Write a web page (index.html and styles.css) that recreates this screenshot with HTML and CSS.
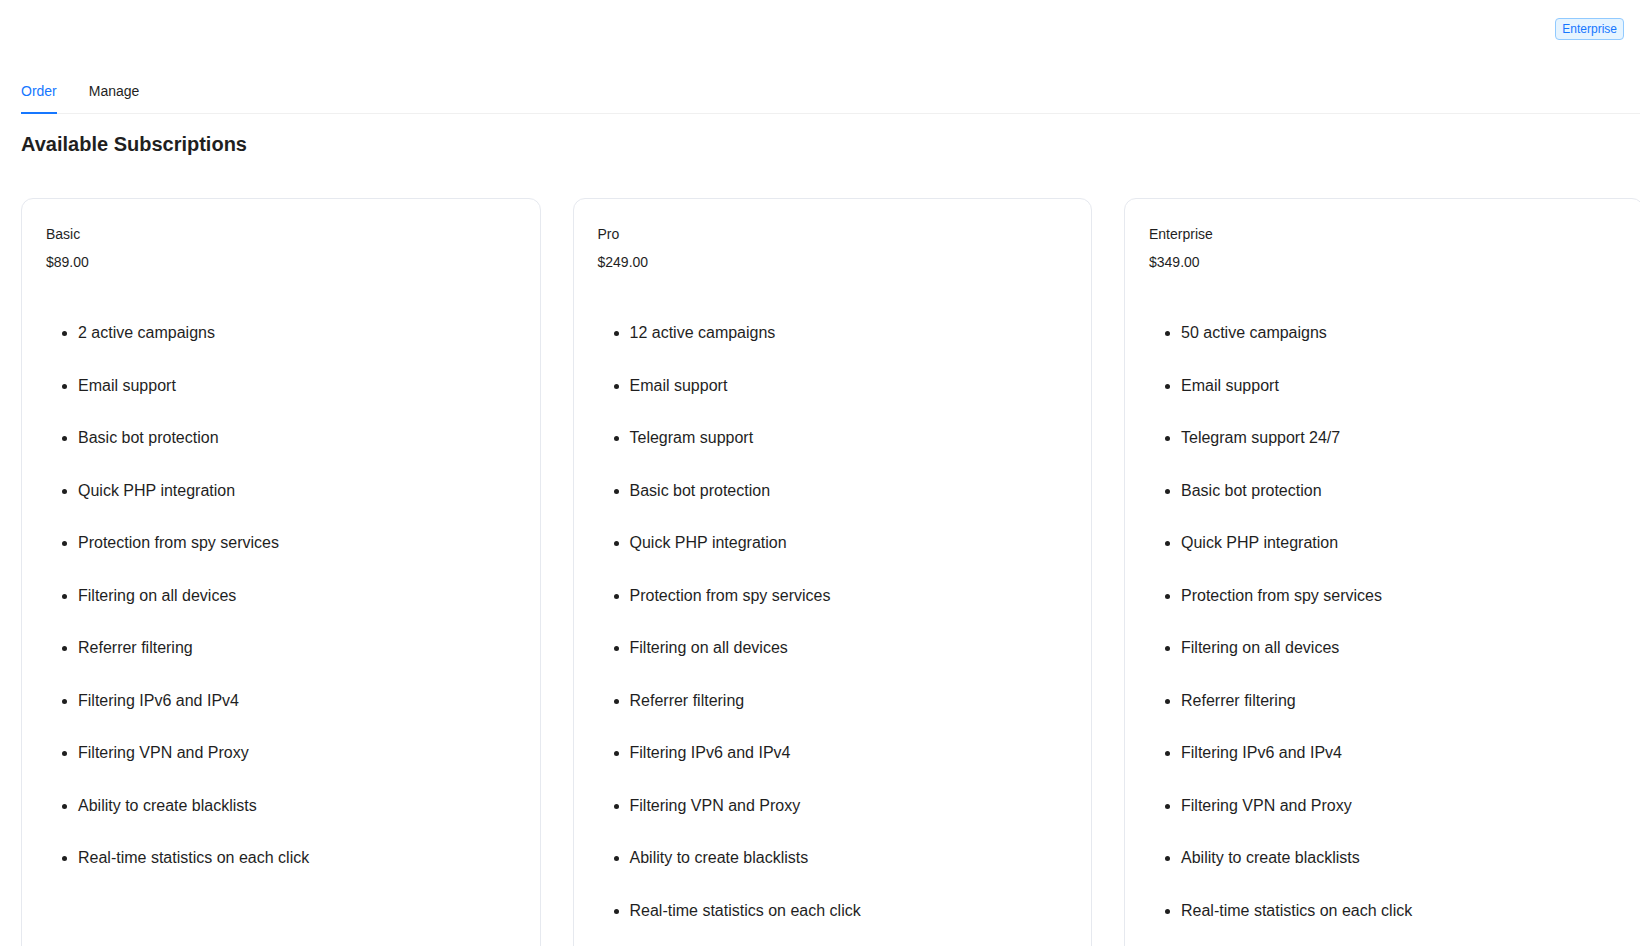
FILE: index.html
```html
<!DOCTYPE html>
<html lang="en">
<head>
<meta charset="utf-8">
<title>Available Subscriptions</title>
<link rel="stylesheet" href="styles.css">
</head>
<body>
<header class="topbar">
  <span class="tag">Enterprise</span>
</header>
<main class="content">
  <nav class="tabs">
    <div class="tab tab-active">Order</div>
    <div class="tab">Manage</div>
  </nav>
  <h2 class="page-title">Available Subscriptions</h2>
  <section class="plans">
    <div class="card">
      <div class="plan-name">Basic</div>
      <div class="plan-price">$89.00</div>
      <ul class="features">
        <li>2 active campaigns</li>
        <li>Email support</li>
        <li>Basic bot protection</li>
        <li>Quick PHP integration</li>
        <li>Protection from spy services</li>
        <li>Filtering on all devices</li>
        <li>Referrer filtering</li>
        <li>Filtering IPv6 and IPv4</li>
        <li>Filtering VPN and Proxy</li>
        <li>Ability to create blacklists</li>
        <li>Real-time statistics on each click</li>
      </ul>
    </div>
    <div class="card">
      <div class="plan-name">Pro</div>
      <div class="plan-price">$249.00</div>
      <ul class="features">
        <li>12 active campaigns</li>
        <li>Email support</li>
        <li>Telegram support</li>
        <li>Basic bot protection</li>
        <li>Quick PHP integration</li>
        <li>Protection from spy services</li>
        <li>Filtering on all devices</li>
        <li>Referrer filtering</li>
        <li>Filtering IPv6 and IPv4</li>
        <li>Filtering VPN and Proxy</li>
        <li>Ability to create blacklists</li>
        <li>Real-time statistics on each click</li>
      </ul>
    </div>
    <div class="card">
      <div class="plan-name">Enterprise</div>
      <div class="plan-price">$349.00</div>
      <ul class="features">
        <li>50 active campaigns</li>
        <li>Email support</li>
        <li>Telegram support 24/7</li>
        <li>Basic bot protection</li>
        <li>Quick PHP integration</li>
        <li>Protection from spy services</li>
        <li>Filtering on all devices</li>
        <li>Referrer filtering</li>
        <li>Filtering IPv6 and IPv4</li>
        <li>Filtering VPN and Proxy</li>
        <li>Ability to create blacklists</li>
        <li>Real-time statistics on each click</li>
      </ul>
    </div>
  </section>
</main>
</body>
</html>
```

FILE: styles.css
```css
html, body {
  margin: 0;
  padding: 0;
  background: #ffffff;
  overflow: hidden;
}

body {
  font-family: "Liberation Sans", Arial, sans-serif;
  color: #1f1f1f;
  width: 1640px;
  height: 946px;
}

.topbar {
  display: flex;
  justify-content: flex-end;
  padding: 18px 16px 0 0;
  height: 51px;
  box-sizing: border-box;
}

.tag {
  display: inline-block;
  height: 22px;
  box-sizing: border-box;
  padding: 0 6px;
  font-size: 12px;
  line-height: 20px;
  color: #1677ff;
  background: #e6f4ff;
  border: 1px solid #91caff;
  border-radius: 4px;
}

.content {
  padding: 16px 0 0 21px;
}

.tabs {
  display: flex;
  gap: 32px;
  border-bottom: 1px solid #f0f0f0;
}

.tab {
  position: relative;
  padding: 13px 0 11px;
  font-size: 14px;
  line-height: 22px;
  color: #1f1f1f;
}

.tab-active {
  color: #1677ff;
}

.tab-active::after {
  content: "";
  position: absolute;
  left: 0;
  right: 0;
  bottom: -1px;
  height: 2px;
  background: #1677ff;
}

.page-title {
  margin: 16px 0 40px;
  font-size: 20px;
  line-height: 28px;
  font-weight: 700;
  color: #1f1f1f;
}

.plans {
  display: grid;
  grid-template-columns: repeat(3, 519.5px);
  gap: 32px;
}

.card {
  border: 1px solid #e6e9ef;
  border-radius: 12px;
  padding: 24px;
  min-height: 760px;
}

.plan-name {
  font-size: 14px;
  line-height: 22px;
  margin-bottom: 6px;
}

.plan-price {
  font-size: 14px;
  line-height: 22px;
}

.features {
  margin: 34px 0 0;
  padding-left: 32px;
  list-style: disc;
}

.features li {
  font-size: 16px;
  line-height: 24.5px;
  padding: 14px 0;
}
```
